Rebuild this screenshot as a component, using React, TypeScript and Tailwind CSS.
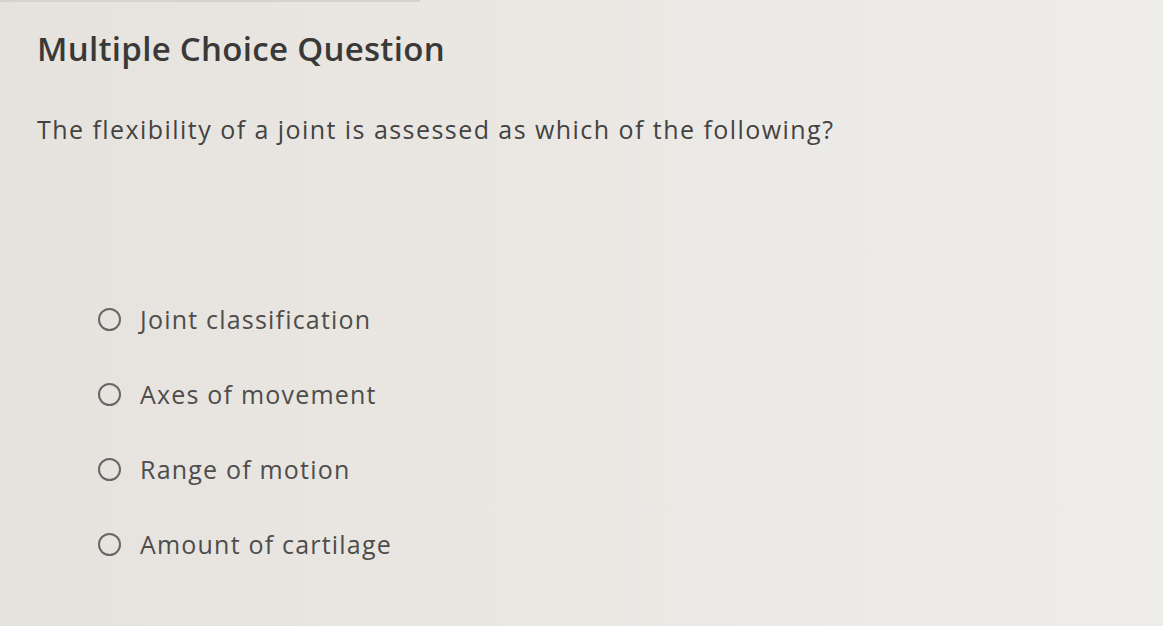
import React from "react";

const options = [
  "Joint classification",
  "Axes of movement",
  "Range of motion",
  "Amount of cartilage",
];

function Radio() {
  return (
    <span className="inline-block h-[23px] w-[23px] shrink-0 rounded-full border-[2.5px] border-[#676765]" />
  );
}

export default function App() {
  return (
    <div
      className="h-[626px] w-[1163px] overflow-hidden bg-gradient-to-r from-[#e6e2de] via-[#ebe8e4] to-[#eeedea] text-[#393938]"
      style={{ fontFamily: "'Open Sans', Lato, sans-serif" }}
    >
      <div className="w-[420px] border-t-2 border-[#d6d3cf]" />
      <div className="pl-[37px] pt-[25px]">
        <h1 className="text-[33px] font-semibold leading-[44px] tracking-[0.3px]">
          Multiple Choice Question
        </h1>
        <p className="mt-[42px] text-[25px] leading-[32px] tracking-[1.45px] text-[#434342]">
          The flexibility of a joint is assessed as which of the following?
        </p>
        <ul className="mt-[158px] ml-[61px] flex flex-col gap-[43px]">
          {options.map((opt) => (
            <li key={opt} className="flex h-[32px] items-center gap-[19px]">
              <Radio />
              <span className="text-[25px] leading-[32px] tracking-[1.2px] text-[#4d4d4b]">
                {opt}
              </span>
            </li>
          ))}
        </ul>
      </div>
    </div>
  );
}
